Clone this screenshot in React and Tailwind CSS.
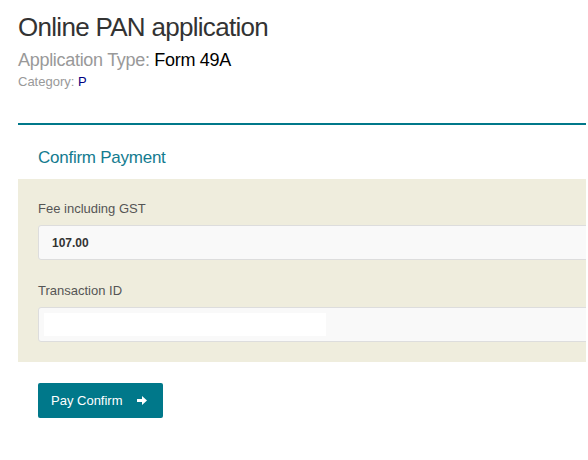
import React from 'react';

const ArrowRight = () => (
  <svg width="10" height="9" viewBox="0 0 10 9" className="shrink-0">
    <path d="M0 3h5V0l5 4.5L5 9V6H0z" fill="#fff" />
  </svg>
);

const App = () => (
  <div className="w-[588px] h-[460px] overflow-hidden bg-white font-['Liberation_Sans'] pl-[18px]">
    {/* Header */}
    <h1 className="mt-[12px] text-[26px] leading-[30px] tracking-[-0.7px] text-[#333] font-normal">Online PAN application</h1>
    <div className="mt-[6px] text-[18px] leading-[24px] tracking-[-0.3px] text-[#999]">
      Application Type: <span className="text-black">Form 49A</span>
    </div>
    <div className="mt-[1px] text-[13px] leading-[18px] text-[#999]">
      Category: <span className="text-[#000080]">P</span>
    </div>

    {/* Payment panel */}
    <div className="w-[568px] mt-[32px] border-t-2 border-[#00788a]">
      <h3 className="pt-[21px] px-5 text-[17px] leading-[24px] tracking-[-0.25px] text-[#137b8f] font-normal">Confirm Payment</h3>
      <div className="mt-[9px] bg-[#efeddd] pl-5 pt-[21px] pb-5 overflow-hidden">
        <label className="block text-[13px] leading-[18px] text-[#555]">Fee including GST</label>
        <div className="mt-[7px] w-[600px] h-[35px] flex items-center pl-[13px] bg-[#f9f9f9] border border-[#ddd] rounded-[3px] text-[12px] font-bold text-[#333]">
          107.00
        </div>
        <label className="block mt-[22px] text-[13px] leading-[18px] text-[#555]">Transaction ID</label>
        <div className="mt-[7px] w-[600px] h-[35px] flex items-center pl-[5px] bg-[#f9f9f9] border border-[#ddd] rounded-[3px]">
          <div className="w-[282px] h-[23px] bg-white" />
        </div>
      </div>

      <button className="ml-5 mt-[21px] h-[35px] flex items-center gap-[14px] pl-[13px] pr-[16px] bg-[#00788a] rounded-[2px] text-white text-[13px]">
        Pay Confirm
        <ArrowRight />
      </button>
    </div>
  </div>
);

export default App;
